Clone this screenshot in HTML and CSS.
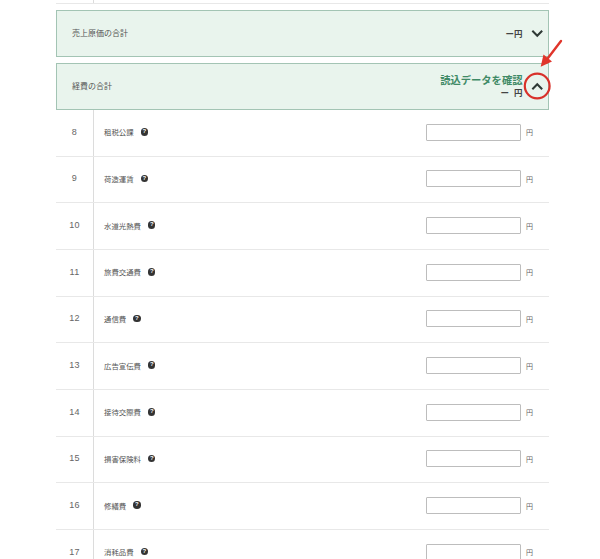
FILE: index.html
```html
<!DOCTYPE html>
<html lang="ja">
<head>
<meta charset="utf-8">
<title>経費の合計</title>
<link rel="stylesheet" href="styles.css">
</head>
<body>
<main class="sheet">
  <div class="stub"><span class="stub-line"></span></div>
  <section class="total">
    <span class="total-label">売上原価の合計</span>
    <div class="total-right">
      <span class="total-value">ー円</span>
      <svg class="chev" viewBox="0 0 14 10"><path d="M1.5 2l5.5 5.5L12.5 2"/></svg>
    </div>
  </section>
  <section class="total">
    <span class="total-label">経費の合計</span>
    <div class="total-right">
      <div class="total-stack">
        <span class="total-link">読込データを確認</span>
        <span class="total-value total-value-spaced">ー 円</span>
      </div>
      <svg class="chev" viewBox="0 0 14 10"><path d="M1.5 8L7 2.5 12.5 8"/></svg>
    </div>
  </section>
  <div class="rows">
    <div class="row"><div class="num">8</div><div class="name">租税公課<span class="help">?</span></div><div class="field"><input class="box" type="text"><span class="unit">円</span></div></div>
    <div class="row"><div class="num">9</div><div class="name">荷造運賃<span class="help">?</span></div><div class="field"><input class="box" type="text"><span class="unit">円</span></div></div>
    <div class="row"><div class="num">10</div><div class="name">水道光熱費<span class="help">?</span></div><div class="field"><input class="box" type="text"><span class="unit">円</span></div></div>
    <div class="row"><div class="num">11</div><div class="name">旅費交通費<span class="help">?</span></div><div class="field"><input class="box" type="text"><span class="unit">円</span></div></div>
    <div class="row"><div class="num">12</div><div class="name">通信費<span class="help">?</span></div><div class="field"><input class="box" type="text"><span class="unit">円</span></div></div>
    <div class="row"><div class="num">13</div><div class="name">広告宣伝費<span class="help">?</span></div><div class="field"><input class="box" type="text"><span class="unit">円</span></div></div>
    <div class="row"><div class="num">14</div><div class="name">接待交際費<span class="help">?</span></div><div class="field"><input class="box" type="text"><span class="unit">円</span></div></div>
    <div class="row"><div class="num">15</div><div class="name">損害保険料<span class="help">?</span></div><div class="field"><input class="box" type="text"><span class="unit">円</span></div></div>
    <div class="row"><div class="num">16</div><div class="name">修繕費<span class="help">?</span></div><div class="field"><input class="box" type="text"><span class="unit">円</span></div></div>
    <div class="row"><div class="num">17</div><div class="name">消耗品費<span class="help">?</span></div><div class="field"><input class="box" type="text"><span class="unit">円</span></div></div>
  </div>
</main>
<svg class="annotation" viewBox="0 0 600 559">
  <circle cx="537.2" cy="86" r="12.4" fill="none" stroke="#d8312a" stroke-width="2.2"/>
  <path d="M561 41L548 58" fill="none" stroke="#e0352b" stroke-width="2.4" stroke-linecap="round"/>
  <path d="M540.7 66.7L552 61.5 543.5 54.5Z" fill="#e0352b"/>
</svg>
</body>
</html>
```
FILE: styles.css
```css
* { box-sizing: border-box; }
html, body { margin: 0; height: 100%; overflow: hidden; background: #fff; }
body {
  font-family: "Noto Sans CJK JP", "Noto Sans", sans-serif;
  color: #4d4d4d;
  position: relative;
}
.sheet { width: 493px; margin-left: 56px; }
.stub { height: 10px; background: linear-gradient(#dcdcdc, #dcdcdc) 37px 0 / 1px 4px no-repeat; }
.stub-line { display: block; height: 4px; border-bottom: 1px solid #e8e8e8; }
.total {
  height: 47px;
  margin-bottom: 6px;
  padding: 0 15px 2px;
  background: #e9f4ed;
  border: 1px solid #a3c4b4;
  display: flex;
  align-items: center;
  justify-content: space-between;
}
.total + .total { margin-bottom: 0; }
.total-label { font-size: 8px; color: #555; }
.total-right { display: flex; align-items: center; gap: 8px; margin-right: -10px; }
.total-stack { display: flex; flex-direction: column; align-items: flex-end; }
.total-link { font-size: 10.3px; line-height: 12px; font-weight: 700; color: #3f8a66; }
.total-value { font-size: 8.5px; line-height: 12px; font-weight: 700; color: #444; }
.total-value-spaced { word-spacing: 3px; }
.chev { width: 12.5px; height: 9px; flex: none; margin-top: 1px; }
.chev path { fill: none; stroke: #2f3a36; stroke-width: 2.3; }
.rows { display: block; }
.row {
  height: 46.67px;
  display: grid;
  grid-template-columns: 38px 332px 1fr;
  align-items: center;
  border-bottom: 1px solid #e8e8e8;
}
.num {
  height: 100%;
  display: flex;
  align-items: center;
  justify-content: center;
  padding-bottom: 2px;
  font-family: "Liberation Sans", sans-serif;
  font-size: 9px;
  letter-spacing: 0.3px;
  color: #666;
  border-right: 1px solid #dcdcdc;
}
.name {
  padding: 0 0 2px 10px;
  font-size: 7.4px;
  color: #555;
  display: flex;
  align-items: center;
  gap: 7px;
}
.help {
  width: 7.5px;
  height: 7.5px;
  border-radius: 50%;
  background: #333;
  color: #fff;
  font-family: "Liberation Sans", sans-serif;
  font-size: 6px;
  line-height: 7.5px;
  font-weight: 700;
  text-align: center;
}
.field { display: flex; align-items: center; gap: 5px; padding-bottom: 1px; }
.box {
  width: 95px;
  height: 17px;
  padding: 0;
  border: 1px solid #bdbdbd;
  border-radius: 1px;
  background: #fff;
}
.unit { font-size: 7px; color: #666; }
.annotation { position: absolute; left: 0; top: 0; width: 600px; height: 559px; pointer-events: none; }
```
